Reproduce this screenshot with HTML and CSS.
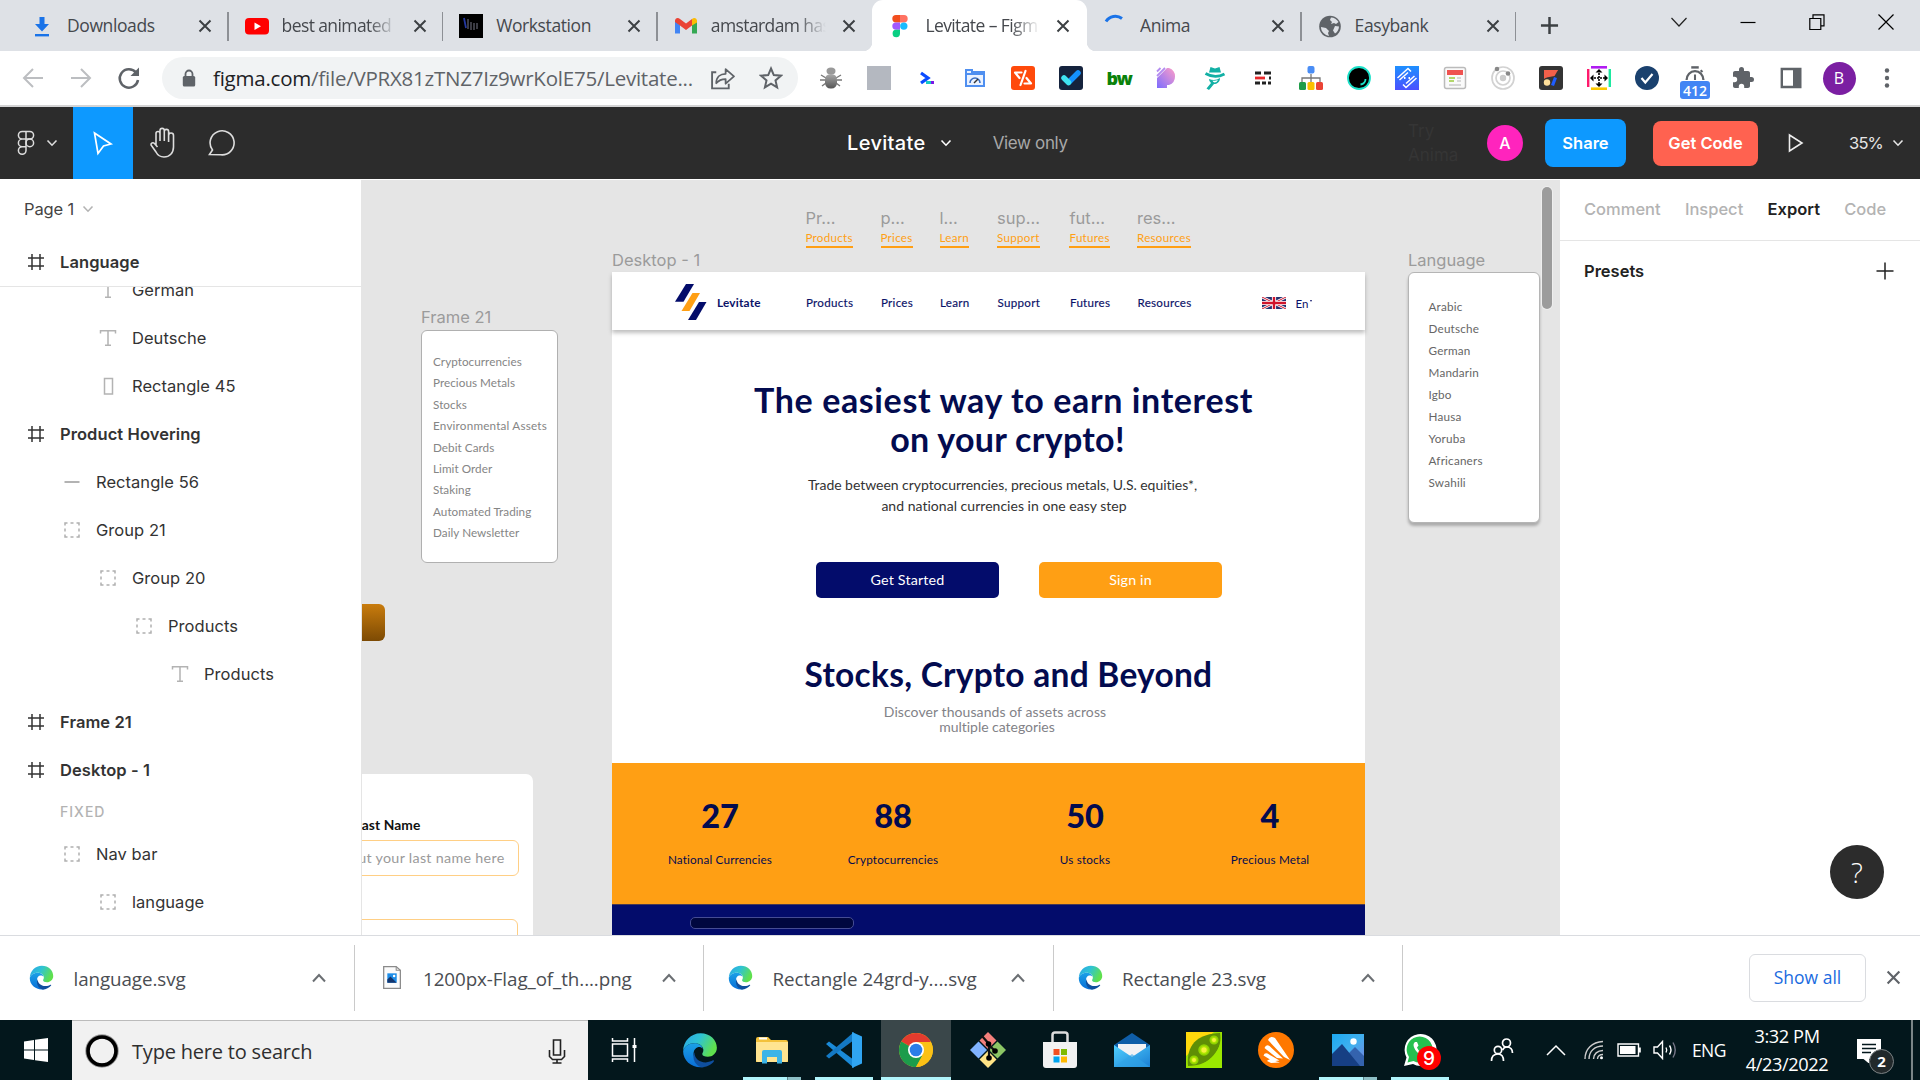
FILE: index.html
```html
<!DOCTYPE html>
<html lang="en">
<head>
<meta charset="utf-8">
<title>Levitate – Figma</title>
<link rel="stylesheet" href="styles.css">
</head>
<body>
<svg class="defs" width="0" height="0" aria-hidden="true">
  <defs>
    <linearGradient id="edgeA" x1="0" y1="0" x2="1" y2="0.4"><stop offset="0" stop-color="#2aa5e8"/><stop offset=".5" stop-color="#2fc3d3"/><stop offset="1" stop-color="#5fe04d"/></linearGradient>
    <linearGradient id="edgeB" x1="0" y1="0" x2="0" y2="1"><stop offset="0" stop-color="#1ba0e6"/><stop offset="1" stop-color="#0a6fd8"/></linearGradient>
    <linearGradient id="pg" x1="0" y1="1" x2="1" y2="0"><stop offset="0" stop-color="#7c6cff"/><stop offset="1" stop-color="#ff9ec8"/></linearGradient>
    <linearGradient id="bug" x1="0" y1="0" x2="0" y2="1"><stop offset="0" stop-color="#aaa"/><stop offset="1" stop-color="#555"/></linearGradient>
    <linearGradient id="mailG" x1="0" y1="0" x2="1" y2="1"><stop offset="0" stop-color="#50d0ff"/><stop offset="1" stop-color="#1b7fd4"/></linearGradient>
    <linearGradient id="photoG" x1="0" y1="0" x2="1" y2="1"><stop offset="0" stop-color="#1ba8f0"/><stop offset=".5" stop-color="#41b0ee"/><stop offset="1" stop-color="#7b7fe0"/></linearGradient>
    <linearGradient id="diaG" x1="0" y1="0" x2="0" y2="1"><stop offset="0" stop-color="#1e90ff"/><stop offset="1" stop-color="#4a50ff"/></linearGradient>
  </defs>
  <symbol id="x" viewBox="0 0 14 14"><path d="M1.5 1.5l11 11M12.5 1.5l-11 11" stroke="currentColor" stroke-width="2" fill="none"/></symbol>
  <symbol id="down" viewBox="0 0 12 8"><path d="M1.5 1.5L6 6.2l4.500-4.700" stroke="currentColor" stroke-width="1.600" fill="none"/></symbol>
  <symbol id="up" viewBox="0 0 16 12"><path d="M2 9.500L8 3l6 6.500" stroke="#6b6f73" stroke-width="2" fill="none"/></symbol>
  <symbol id="hash" viewBox="0 0 18 18"><path d="M5 1v16M13 1v16M1 5h16M1 13h16" stroke="#333" stroke-width="1.500" fill="none"/></symbol>
  <symbol id="tee" viewBox="0 0 18 18"><path d="M1.500 4.500V1.800h15v2.700M9 1.800v14.500M6 16.300h6" stroke="#b3b3b3" stroke-width="1.500" fill="none"/></symbol>
  <symbol id="grp" viewBox="0 0 18 18"><path d="M2 4.500V2h2.500M7.500 2h3M13.500 2H16v2.500M16 7.500v3M16 13.500V16h-2.500M10.500 16h-3M4.500 16H2v-2.500M2 10.500v-3" stroke="#b0b0b0" stroke-width="1.500" fill="none"/></symbol>
  <symbol id="edge" viewBox="0 0 32 32">
    <path d="M1 17C1 8 8 1 16.500 1 25 1 31 7 31 14c0 5-4 8-8 8-3 0-5-1-5-2.500 0-1 1-1.500 1-3.500 0-3-3-6-8-6C6 10 2 13 1 17z" fill="url(#edgeA)"/>
    <path d="M1 17c1-4 5-7 10-7 4 0 7 2 7.500 5-1-1.500-3-2-4.500-1.500C10 15 9 20 12 25c2 3.500 5 5.500 8 6-1 .2-2.500.3-3.500.3C8 31.300 1 25 1 17z" fill="url(#edgeB)"/>
    <path d="M11 18c0 5 4 9 10 9 3 0 5-1 6.500-1.800.6-.3 1.200.4.800 1C26 29 22 31.300 17.500 31.300 12 30 8.500 24 11 18z" fill="#0f4f9e"/>
  </symbol>
</svg>

<header class="tabs">
  <div class="tab"><svg class="fav" viewBox="0 0 24 24"><path d="M9.500 3h5v7H19l-7 7.500L5 10h4.500z" fill="#1a73e8"/><path d="M5 20h14v2.400H5z" fill="#1a73e8"/></svg><span>Downloads</span><svg class="tx"><use href="#x"/></svg></div>
  <div class="tab"><svg class="fav" viewBox="0 0 24 24"><rect x="0" y="4" width="24" height="16.500" rx="4" fill="#f00"/><path d="M9.500 8.500l6.500 3.800-6.500 3.800z" fill="#fff"/></svg><span class="fade">best animated</span><svg class="tx"><use href="#x"/></svg></div>
  <div class="tab"><svg class="fav" viewBox="0 0 24 24"><rect width="24" height="24" fill="#000"/><path d="M5 4l2 10" stroke="#2438a0" stroke-width="1.800"/><path d="M9 5v10M12 8v8M15 9v7M18 9v6" stroke="#3c3c44" stroke-width="2"/></svg><span>Workstation</span><svg class="tx"><use href="#x"/></svg></div>
  <div class="tab"><svg class="fav" viewBox="0 0 24 24"><path d="M1 6v13.500h5V11z" fill="#4285f4"/><path d="M23 6v13.500h-5V11z" fill="#34a853"/><path d="M1 7c0-3 3-4 5-2l6 4.500L18 5v6.500L12 16 6 11.500 1 8z" fill="#ea4335"/><path d="M18 5c2-2 5-1 5 2v1.500l-5 3z" fill="#fbbc04"/></svg><span class="fade">amstardam has</span><svg class="tx"><use href="#x"/></svg></div>
  <div class="tab active"><svg class="fav" viewBox="0 0 24 24"><path d="M12 1H8a3.700 3.700 0 000 7.400h4z" fill="#f24e1e"/><path d="M12 1h4a3.700 3.700 0 010 7.400h-4z" fill="#ff7262"/><path d="M12 8.400H8a3.700 3.700 0 000 7.400h4z" fill="#a259ff"/><circle cx="15.800" cy="12.100" r="3.700" fill="#1abcfe"/><path d="M12 15.800H8a3.700 3.700 0 104 3.700z" fill="#0acf83"/></svg><span class="fade">Levitate – Figm</span><svg class="tx"><use href="#x"/></svg></div>
  <div class="tab"><svg class="fav" viewBox="0 0 24 24"><path d="M3 7.500A11 11 0 0119 4.500" stroke="#1a73e8" stroke-width="3" fill="none"/></svg><span>Anima</span><svg class="tx"><use href="#x"/></svg></div>
  <div class="tab"><svg class="fav" viewBox="0 0 24 24"><circle cx="12" cy="12.500" r="10.800" fill="#5f6368"/><path d="M13 3.500c3 0 6 2 7.500 4.500L18 10l-2-1-3 1 1-2-2-2zM3 13l5 1 3 3-1 2 1 3c-4-1-8-4-8-9zM17 12l4 .5c0 3-2 6-4 7l-2-3z" fill="#dee1e6"/></svg><span>Easybank</span><svg class="tx"><use href="#x"/></svg></div>
  <svg class="plus" viewBox="0 0 20 20"><path d="M10 1v18M1 10h18" stroke="#3c4043" stroke-width="2.600"/></svg>
  <div class="winctl">
    <svg viewBox="0 0 16 16"><path d="M.5 4L8 12l7.500-8" stroke="#222" stroke-width="1.200" fill="none"/></svg>
    <svg viewBox="0 0 16 16"><path d="M.5 8.500h15" stroke="#000" stroke-width="1.200"/></svg>
    <svg viewBox="0 0 16 16"><path d="M.8 4.500h11v11H.8zM4 4.500v-3.700h11v11h-3.200" stroke="#000" stroke-width="1.200" fill="none"/></svg>
    <svg viewBox="0 0 16 16"><path d="M.5.500l15 15M15.500.500l-15 15" stroke="#000" stroke-width="1.200"/></svg>
  </div>
</header>

<div class="toolbar">
  <svg class="nav" viewBox="0 0 24 24"><path d="M22 12H3M12 3L3 12l9 9" stroke="#bcbec1" stroke-width="2" fill="none"/></svg>
  <svg class="nav" viewBox="0 0 24 24"><path d="M2 12h19M12 3l9 9-9 9" stroke="#bcbec1" stroke-width="2" fill="none"/></svg>
  <svg class="nav n3" viewBox="0 0 24 24"><path d="M19 6.500A9.200 9.200 0 1021 14" stroke="#5f6368" stroke-width="2.500" fill="none"/><path d="M22 1.500V10h-8.500z" fill="#5f6368"/></svg>
  <div class="omni">
    <svg class="lock" viewBox="0 0 14 18"><path d="M3.500 8V5a3.500 3.500 0 017 0v3" stroke="#5f6368" stroke-width="1.800" fill="none"/><rect x=".8" y="7" width="12.400" height="10.500" rx="1.500" fill="#5f6368"/></svg>
    <span class="url"><b>figma.com</b>/file/VPRX81zTNZ7Iz9wrKolE75/Levitate...</span>
    <svg class="share" viewBox="0 0 24 24"><path d="M6 6H2v15.500h16V17" stroke="#5f6368" stroke-width="1.800" fill="none"/><path d="M6 16.500c0-6 4-9 9-9V3l8 7-8 7v-4.500c-4 0-6.500 1-9 4z" stroke="#5f6368" stroke-width="1.700" fill="none" stroke-linejoin="round"/></svg>
    <svg class="star" viewBox="0 0 24 24"><path d="M12 2.500l2.800 6.600 7.100.6-5.400 4.700 1.600 7L12 17.700l-6.100 3.700 1.600-7L2.100 9.700l7.100-.6z" stroke="#5f6368" stroke-width="2" fill="none"/></svg>
  </div>
  <div class="exts">
    <svg viewBox="0 0 24 24"><path d="M2 9l5 3M1 14h5M3 20l4-3M22 9l-5 3M23 14h-5M21 20l-4-3" stroke="#777" stroke-width="1.400"/><ellipse cx="12" cy="5" rx="4.500" ry="3.500" fill="#999"/><rect x="6" y="8" width="12" height="14.500" rx="5.500" fill="url(#bug)"/></svg>
    <svg viewBox="0 0 24 24"><rect width="24" height="24" fill="#b4b8c0"/></svg>
    <svg viewBox="0 0 24 24"><path d="M6 7l7 5-7 5" stroke="#0a4bff" stroke-width="3.200" fill="none"/><path d="M11 16.500h6" stroke="#17c9c4" stroke-width="3"/><path d="M16 16.500h3" stroke="#7a18e8" stroke-width="3"/></svg>
    <svg viewBox="0 0 24 24"><path d="M3 4h6v2h12v14H3z" fill="#eaf2ff" stroke="#4f8ff0" stroke-width="2"/><path d="M3 8h18" stroke="#4f8ff0" stroke-width="2"/><path d="M7 17a5 5 0 0110 0" stroke="#3a6fc4" stroke-width="1.600" fill="none"/><path d="M11 17l4-4" stroke="#333" stroke-width="1.500"/></svg>
    <svg viewBox="0 0 24 24"><rect width="24" height="24" rx="3" fill="#ff4a0b"/><path d="M10.500 6.500H4l4.500 5.500M14.500 5l-5 14M13.500 17.500H20L15.500 12" stroke="#fff" stroke-width="2.200" fill="none" stroke-linejoin="round" stroke-linecap="round"/></svg>
    <svg viewBox="0 0 24 24"><rect width="24" height="24" rx="3" fill="#15233d"/><path d="M10 16l9-9" stroke="#1492ff" stroke-width="5.500" stroke-linecap="round"/><path d="M5 12l4.500 4.500" stroke="#3fe3f2" stroke-width="5.500" stroke-linecap="round"/></svg>
    <span class="bw">bw</span>
    <svg viewBox="0 0 24 24"><path d="M2 22V12L12 2h2a9 9 0 010 17h-2v3z" fill="url(#pg)"/><path d="M2 10l8-8M2 5.500L5.500 2" stroke="#b48cf0" stroke-width="1.800"/></svg>
    <svg viewBox="0 0 24 24"><path d="M7.500 1l4.500 1.500L16.500 1 18 6.500H6z" fill="#12b0a5"/><path d="M2.500 7.500Q12 13 21.500 8" stroke="#12b0a5" stroke-width="2.800" fill="none"/><path d="M6 13q6 2.500 11-1c0 4-3 6-6 6l-5 6-2.500-1.500L8 17q-2-1.500-2-4z" fill="#12b0a5"/><path d="M9.500 14.500q3 .6 5.500-.7-1 2.700-3.500 2.700-1.700-.3-2-2z" fill="#fff"/></svg>
    <svg viewBox="0 0 24 24"><path d="M4 7h6M13 7h7M4 17h5M11 17h4M17 17h3M18 12h2" stroke="#222" stroke-width="2.800"/><path d="M4 12h10" stroke="#e8282b" stroke-width="2.800"/></svg>
    <svg viewBox="0 0 24 24"><path d="M3 16v-4h18v4M12 8v8" stroke="#777" stroke-width="1.300" fill="none"/><rect x="8.500" y="0" width="7" height="7.500" rx="2" fill="#4a8df5"/><rect x="0" y="16" width="7" height="8" rx="1.500" fill="#1f9d49"/><rect x="8.500" y="16" width="7" height="8" rx="1.500" fill="#fbc100"/><rect x="17" y="16" width="7" height="8" rx="1.500" fill="#ea4335"/></svg>
    <svg viewBox="0 0 24 24"><circle cx="12" cy="12" r="11" fill="#000" stroke="#1be0c8" stroke-width="1.800"/><path d="M18.500 13c0 3-2 5-5 5.500" stroke="#1be0c8" stroke-width="1.800" fill="none"/></svg>
    <svg viewBox="0 0 24 24"><rect width="24" height="24" fill="url(#diaG)"/><path d="M2.500 12L13 2.500l3 3M21.500 12L11 21.500l-3-3M4.500 14L13 6.500M19.500 10L11 17.500" stroke="#fff" stroke-width="1.500" fill="none"/><path d="M9 12h1.500M13.500 12H15" stroke="#fff" stroke-width="1.800"/></svg>
    <svg viewBox="0 0 24 24"><rect x="1.500" y="1.500" width="21" height="21" rx="2" fill="#fafafa" stroke="#bbb" stroke-width="1.500"/><rect x="4" y="4" width="16" height="5" fill="#ef5350"/><path d="M6 12h6M6 15h5" stroke="#9ccc3c" stroke-width="1.600"/><path d="M14 12h4M14 15h4M6 19h12" stroke="#ccc" stroke-width="1.400"/></svg>
    <svg viewBox="0 0 24 24"><g fill="none" stroke="#d2d2d2" stroke-width="1.700"><circle cx="12" cy="12" r="11"/><circle cx="12" cy="12" r="7"/></g><circle cx="12" cy="12" r="3.200" fill="#ccc"/><circle cx="6" cy="3" r="2.300" fill="#888"/><circle cx="17" cy="7.500" r="2.300" fill="#888"/></svg>
    <svg viewBox="0 0 24 24"><rect width="24" height="24" rx="3" fill="#343434"/><path d="M5 4h14L5 13z" fill="#f2604a"/><path d="M5 4h14l-3.500 6L5 12z" fill="#f2604a"/><circle cx="8" cy="16.500" r="3.200" fill="#ffdf9a"/><path d="M16.500 11.500l-3 8" stroke="#1f5dff" stroke-width="3.200"/></svg>
    <svg viewBox="0 0 24 24"><path d="M4 1.300h16" stroke="#b01cf2" stroke-width="2.600"/><path d="M4 22.700h16" stroke="#fbc800" stroke-width="2.600"/><path d="M1.200 3v18" stroke="#ff1a6c" stroke-width="2.400"/><path d="M22.800 3v18" stroke="#1de9a0" stroke-width="2.400"/><path d="M12 4v16M4 12h16" stroke="#000" stroke-width="1.600" stroke-dasharray="2 1"/><path d="M8.500 6.500L12 3l3.500 3.500zM8.500 17.500L12 21l3.500-3.500zM6.500 8.500L3 12l3.500 3.500zM17.500 8.500L21 12l-3.500 3.500z"/></svg>
    <svg viewBox="0 0 24 24"><circle cx="12" cy="12" r="12" fill="#1a416e"/><path d="M6.500 12l3.800 4.500L17.500 8" stroke="#fff" stroke-width="2.200" fill="none"/></svg>
    <span class="timer"><svg viewBox="0 0 24 16"><path d="M8 1.500h8" stroke="#5f6368" stroke-width="2.600"/><path d="M3 15a9 9.500 0 0118 0" stroke="#5f6368" stroke-width="2.400" fill="none"/><path d="M12 9v6M18 4.500l2 2" stroke="#5f6368" stroke-width="2.200"/></svg><i>412</i></span>
    <svg viewBox="0 0 24 24"><path d="M20.500 11H19V7c0-1.100-.9-2-2-2h-4V3.500a2.500 2.500 0 00-5 0V5H4c-1.100 0-2 .9-2 2v3.800h1.500a2.700 2.700 0 010 5.400H2V20c0 1.100.9 2 2 2h3.800v-1.500a2.700 2.700 0 015.400 0V22H17c1.100 0 2-.9 2-2v-4h1.500a2.500 2.500 0 000-5z" fill="#5f6368"/></svg>
    <svg viewBox="0 0 24 24"><path d="M2.800 3h18.500v18H2.800z" fill="#fff" stroke="#5f6368" stroke-width="2.400"/><path d="M14 3h7v18h-7z" fill="#5f6368"/></svg>
    <span class="pf">B</span>
    <svg viewBox="0 0 24 24" fill="#5f6368"><circle cx="12" cy="4.500" r="2.200"/><circle cx="12" cy="12" r="2.200"/><circle cx="12" cy="19.500" r="2.200"/></svg>
  </div>
</div>

<div class="figbar">
  <div class="fmenu">
    <svg width="18" height="26" viewBox="0 0 18 26" fill="none" stroke="#ddd" stroke-width="1.500"><path d="M9 1.500H5.200a3.800 3.800 0 000 7.600H9zM9 1.500h3.800a3.800 3.800 0 010 7.600H9zM9 9.100H5.200a3.800 3.800 0 000 7.600H9zM9 16.700H5.200A3.800 3.800 0 109 20.500z"/><circle cx="12.800" cy="12.900" r="3.800"/></svg>
    <svg width="12" height="8"><use href="#down"/></svg>
  </div>
  <div class="tool on"><svg width="22" height="26" viewBox="0 0 22 26"><path d="M2.500 3l16.500 11-7.500 2-5.500 7.500z" fill="none" stroke="#fff" stroke-width="1.700"/></svg></div>
  <div class="tool"><svg width="28" height="32" viewBox="0 0 28 32"><path d="M7 18V6.500a2 2 0 014 0V14M11 14V3.500a2 2 0 014.300 0V14M15.300 14V4.500a2 2 0 014.300 0V15M19.600 8.500a2.200 2.200 0 014.900 0V20c0 6-4 10-9.500 10-4 0-6.500-2-8-5L2 18c-.5-2 2-3 3.500-1.500L8.500 20" fill="none" stroke="#ddd" stroke-width="1.600"/></svg></div>
  <div class="tool"><svg class="cmt" width="28" height="28" viewBox="0 0 28 28"><path d="M1.500 25.500l3-4.500a12 12 0 118 4.700z" fill="none" stroke="#ddd" stroke-width="1.600"/></svg></div>
  <div class="ftitle">Levitate<svg width="12" height="8"><use href="#down"/></svg><span>View only</span></div>
  <div class="anima">Try<br>Anima</div>
  <div class="ava">A</div>
  <div class="btn sh">Share</div>
  <div class="btn gc">Get Code</div>
  <svg class="play" width="16" height="20" viewBox="0 0 16 20"><path d="M1.500 2v16L14 10z" fill="none" stroke="#eee" stroke-width="1.600"/></svg>
  <div class="zoom">35%<svg width="12" height="8"><use href="#down"/></svg></div>
</div>

<main class="work">
  <aside class="left">
    <div class="page">Page 1<svg width="12" height="8"><use href="#down"/></svg></div>
    <div class="row top stick"><svg><use href="#hash"/></svg>Language</div>
    <div class="layers">
      <div class="row i2"><svg><use href="#tee"/></svg>German</div>
      <div class="row i2"><svg><use href="#tee"/></svg>Deutsche</div>
      <div class="row i2"><svg viewBox="0 0 18 18"><rect x="5.500" y="1.500" width="8" height="15.500" fill="none" stroke="#b3b3b3" stroke-width="1.500"/></svg>Rectangle 45</div>
      <div class="row top"><svg><use href="#hash"/></svg>Product Hovering</div>
      <div class="row i1"><svg viewBox="0 0 18 18"><path d="M1.500 9h15" stroke="#b3b3b3" stroke-width="2"/></svg>Rectangle 56</div>
      <div class="row i1"><svg><use href="#grp"/></svg>Group 21</div>
      <div class="row i2"><svg><use href="#grp"/></svg>Group 20</div>
      <div class="row i3"><svg><use href="#grp"/></svg>Products</div>
      <div class="row i4"><svg><use href="#tee"/></svg>Products</div>
      <div class="row top"><svg><use href="#hash"/></svg>Frame 21</div>
      <div class="row top"><svg><use href="#hash"/></svg>Desktop - 1</div>
      <div class="fixed">FIXED</div>
      <div class="row i1"><svg><use href="#grp"/></svg>Nav bar</div>
      <div class="row i2"><svg><use href="#grp"/></svg>language</div>
    </div>
  </aside>

  <section class="canvas">
    <div class="brown"></div>
    <div class="form">
      <div class="flabel">Last Name</div>
      <div class="finput">Input your last name here</div>
      <div class="finput second"></div>
    </div>
    <div class="frame f21">
      <h6>Frame 21</h6>
      <ul><li>Cryptocurrencies</li><li>Precious Metals</li><li>Stocks</li><li class="wide">Environmental Assets</li><li>Debit Cards</li><li>Limit Order</li><li>Staking</li><li>Automated Trading</li><li>Daily Newsletter</li></ul>
    </div>
    <div class="hovers navgrid">
      <div><em>Pr...</em><u>Products</u></div><div><em>p...</em><u>Prices</u></div><div><em>l...</em><u>Learn</u></div><div><em>sup...</em><u>Support</u></div><div><em>fut...</em><u>Futures</u></div><div><em>res...</em><u>Resources</u></div>
    </div>
    <div class="frame desk">
      <h6>Desktop - 1</h6>
      <div class="site">
        <nav>
          <svg class="logo" width="32" height="36" viewBox="0 0 32 36"><path d="M0 17.800L11 0h8L8.500 17.800z" fill="#030c6b"/><path d="M6.500 27l11-18H25L14.500 27z" fill="#ff9f14"/><path d="M13 36l11-18h7.500L21 36z" fill="#030c6b"/></svg>
          <strong>Levitate</strong>
          <div class="navgrid"><span>Products</span><span>Prices</span><span>Learn</span><span>Support</span><span>Futures</span><span>Resources</span></div>
          <svg class="flag" width="24" height="12" viewBox="0 0 24 12"><path d="M0 0h24v12H0z" fill="#23306f"/><path d="M0 0l24 12M24 0L0 12" stroke="#fff" stroke-width="2.600"/><path d="M0 0l24 12M24 0L0 12" stroke="#d0142c" stroke-width="1"/><path d="M12 0v12M0 6h24" stroke="#fff" stroke-width="4.200"/><path d="M12 0v12M0 6h24" stroke="#d0142c" stroke-width="2.400"/></svg>
          <span class="en">En</span><i class="tri"></i>
        </nav>
        <h1>The easiest way to earn interest<br><span>on your crypto!</span></h1>
        <p class="lead">Trade between cryptocurrencies, precious metals, U.S. equities*,<br><span>and national currencies in one easy step</span></p>
        <div class="cta"><a>Get Started</a><a class="or">Sign in</a></div>
        <h2>Stocks, Crypto and Beyond</h2>
        <p class="sub">Discover thousands of assets across<br><span>multiple categories</span></p>
        <div class="stats">
          <div><b>27</b>National Currencies</div><div><b>88</b>Cryptocurrencies</div><div><b>50</b>Us stocks</div><div><b>4</b>Precious Metal</div>
        </div>
        <div class="navy"><i></i></div>
      </div>
    </div>
    <div class="frame lang">
      <h6>Language</h6>
      <ul><li>Arabic</li><li>Deutsche</li><li>German</li><li>Mandarin</li><li>Igbo</li><li>Hausa</li><li>Yoruba</li><li>Africaners</li><li>Swahili</li></ul>
    </div>
    <div class="scroll"></div>
  </section>

  <aside class="right">
    <div class="rtabs"><span>Comment</span><span>Inspect</span><span class="cur">Export</span><span>Code</span></div>
    <div class="presets">Presets<svg width="18" height="18" viewBox="0 0 18 18"><path d="M9 .500v17M.500 9h17" stroke="#222" stroke-width="1.500"/></svg></div>
    <div class="help">?</div>
  </aside>
</main>

<div class="dls">
  <div class="dl"><svg class="ic"><use href="#edge"/></svg><span>language.svg</span><svg class="up"><use href="#up"/></svg></div>
  <div class="dl"><svg class="ic" viewBox="0 0 24 24"><path d="M4.500 1.500h12l4 3.500v17.500h-16z" fill="#fbfbfb" stroke="#8a8a8a" stroke-width="1.200"/><path d="M16.500 1.500V5h4" fill="none" stroke="#8a8a8a"/><rect x="8" y="8" width="9" height="9" fill="#1d8de8"/><path d="M8 17v-3l3-3 6 6z" fill="#12356e"/><circle cx="14.500" cy="10.500" r="1.200" fill="#fff"/></svg><span>1200px-Flag_of_th....png</span><svg class="up"><use href="#up"/></svg></div>
  <div class="dl"><svg class="ic"><use href="#edge"/></svg><span class="t3">Rectangle 24grd-y....svg</span><svg class="up"><use href="#up"/></svg></div>
  <div class="dl"><svg class="ic"><use href="#edge"/></svg><span>Rectangle 23.svg</span><svg class="up"><use href="#up"/></svg></div>
  <div class="showall">Show all</div>
  <svg class="dx" width="15" height="15"><use href="#x"/></svg>
</div>

<footer class="task">
  <div class="start"><svg width="24" height="24" viewBox="0 0 24 24" fill="#fff"><path d="M0 3.400L10 2v9.500H0zM11 1.800L24 0v11.500H11zM0 12.500h10V22L0 20.600zM11 12.500h13V24l-13-1.800z"/></svg></div>
  <div class="search">
    <svg width="34" height="34" viewBox="0 0 34 34"><circle cx="17" cy="17" r="14.500" fill="none" stroke="#999" stroke-width="4.500"/><circle cx="17" cy="17" r="14" fill="none" stroke="#000" stroke-width="3.600"/></svg>
    <span>Type here to search</span>
    <svg width="18" height="26" viewBox="0 0 18 26"><path d="M5.500 2h7v15h-7zM1.500 12v6.500l3 3h9l3-3V12M9 21.500V25M4.500 25h9" fill="none" stroke="#222" stroke-width="1.600"/></svg>
  </div>
  <div class="cell tv"><svg width="26" height="24" viewBox="0 0 26 24" fill="none" stroke="#fff" stroke-width="1.500"><path d="M1.500 6h15v12h-15zM1.500 0v3h15V0M1.500 24v-3h15v3M23.500 0v24"/><path d="M21.500 8.500h4" stroke-width="3"/></svg></div>
  <div class="cell"><svg width="36" height="36"><use href="#edge"/></svg></div>
  <div class="cell w"><svg width="32" height="28" viewBox="0 0 32 28"><path d="M0 3q0-2 2-2h10l3 3h15q2 0 2 2v20H0z" fill="#f3c13a"/><path d="M0 6h32v18q0 2-2 2H2q-2 0-2-2z" fill="#ffe490"/><path d="M3 2.500h8" stroke="#fff" stroke-width="2"/><path d="M6 27.500V16q0-2 2-2h16q2 0 2 2v11.500h-5V21H11v6.500z" fill="#3cb4e7"/></svg></div>
  <div class="cell"><svg width="36" height="36" viewBox="0 0 36 36"><path d="M0 12l3-2.500L28 28v8z" fill="#1a8ad8"/><path d="M0 24l3 2.500L28 8V0z" fill="#1479c4"/><path d="M26 0l10 4.500v27L26 36z" fill="#30a5f2"/></svg><i class="line"></i></div>
  <div class="cell chrome"><svg width="34" height="34" viewBox="0 0 34 34"><circle cx="17" cy="17" r="17" fill="#fbc116"/><path d="M17 17L2.300 8.500A17 17 0 0131.700 8.500z" fill="#e33b2e"/><path d="M17 17L2.300 8.500A17 17 0 0017 34l6-11z" fill="#1c9c4b"/><path d="M17 9h14.900A17 17 0 0117 34l7-12z" fill="#fbc116"/><circle cx="17" cy="17" r="8" fill="#fff"/><circle cx="17" cy="17" r="6.300" fill="#2b7de9"/></svg><i class="line"></i></div>
  <div class="cell"><svg width="38" height="38" viewBox="0 0 38 38"><path d="M19 1l8.500 8.500L19 18l-8.500-8.500z" fill="#f4807c"/><path d="M28.500 10.500L37 19l-8.500 8.500L20 19z" fill="#8cc665"/><path d="M19 20l8.500 8.500L19 37l-8.500-8.500z" fill="#ffe486"/><path d="M9.500 10.500L18 19l-8.500 8.500L1 19z" fill="#80b3ff"/><path d="M13 5l7 8v15M20 14l7 7" stroke="#111" stroke-width="2.200" fill="none"/><circle cx="19.500" cy="13" r="2.800"/><circle cx="26" cy="20" r="2.800"/><circle cx="20" cy="27" r="2.800"/></svg></div>
  <div class="cell"><svg width="36" height="38" viewBox="0 0 36 38"><path d="M10.500 13V4q0-2.500 2.500-2.500h10q2.500 0 2.500 2.500v9" fill="none" stroke="#ddd" stroke-width="2.500"/><path d="M1 11h34v23q0 3-3 3H4q-3 0-3-3z" fill="#f2f2f2"/><path d="M11.500 18h6v6h-6z" fill="#f25022"/><path d="M19 18h6v6h-6z" fill="#7fba00"/><path d="M11.500 25.500h6v6h-6z" fill="#00a4ef"/><path d="M19 25.500h6v6h-6z" fill="#ffb900"/></svg></div>
  <div class="cell"><svg width="36" height="34" viewBox="0 0 36 34"><path d="M0 12L18 0l18 12v5H0z" fill="#0f5ea8"/><path d="M4 11h28v14H4z" fill="#f2f2f4"/><path d="M0 12l18 12 18-12v22H0z" fill="url(#mailG)"/><path d="M0 34l18-13 18 13z" fill="#31a4e6" opacity=".6"/></svg></div>
  <div class="cell"><svg width="36" height="36" viewBox="0 0 36 36"><path d="M0 0h36v36H0z" fill="#9be000"/><path d="M0 0h28L0 24z" fill="#ffd90c"/><path d="M2 34C0 12 12 2 34 1c3 18-10 33-32 33z" fill="#5f8f05"/><path d="M36 0v36H5C24 32 36 18 36 0z" fill="#9be800"/><g fill="#aee500" stroke="#8fd400" stroke-width="1.500"><circle cx="8" cy="28" r="3.800"/><circle cx="18" cy="18" r="5"/><circle cx="28" cy="8" r="3.800"/></g><g fill="#f5f23c"><circle cx="8" cy="28" r="2"/><circle cx="18" cy="18" r="2.700"/><circle cx="28" cy="8" r="2"/></g></svg></div>
  <div class="cell"><svg width="36" height="36" viewBox="0 0 36 36"><circle cx="18" cy="18" r="18" fill="#ff7800"/><path d="M10 8Q12 3 17 6l15 22-6-3zM6.500 16q1.500-4 5-2l13.500 12.500-6-.5zM5.500 23.500q1-3 4-2l12 7-6.500.8zM9 29q1-2 3.500-1.500l9.500 3-9 .5z" fill="#fff"/></svg></div>
  <div class="cell w"><svg width="32" height="32" viewBox="0 0 32 32"><path d="M0 0h32v32H0z" fill="url(#photoG)"/><path d="M16 20l7-7 9 9v10H8z" fill="#3463ae"/><path d="M0 20l10-10 18 22H0z" fill="#163f83"/><circle cx="21.500" cy="7.500" r="3.200" fill="#fff"/></svg></div>
  <div class="cell wa"><svg width="34" height="34" viewBox="0 0 34 34"><path d="M1 33l2.500-8.500A16 16 0 1110 31z" fill="#fff"/><path d="M4.500 29.500L6 24a13 13 0 114.500 4z" fill="#25c04f"/><path d="M12 9c-3 2-1 7 3 11 4 4 8 5 10 3l.5-3-4-2-2 2c-3-1-5-4-5.500-5.500l1.500-2L14 9z" fill="#fff"/></svg><b>9</b><i class="line"></i></div>
  <div class="tray">
    <svg width="24" height="24" viewBox="0 0 24 24" fill="none" stroke="#fff" stroke-width="1.700"><circle cx="8" cy="12" r="3.700"/><path d="M1.500 23c0-4 2-7 6.500-7s5.500 3 5.500 7"/><circle cx="16.500" cy="5" r="4"/><path d="M12.500 12c1-2 2.500-3 4-3 4 0 6 2.500 6 6"/></svg>
    <svg class="g1" width="20" height="12" viewBox="0 0 20 12"><path d="M1 11l9-9 9 9" stroke="#fff" stroke-width="1.500" fill="none"/></svg>
    <svg class="g2" width="20" height="20" viewBox="0 0 20 20" fill="none" stroke="#ccc" stroke-width="1.400"><path d="M1 19C1 9 8 2 19 1.500M5 19C5 11 11 6 19 6M9.500 19c0-5 4-8.500 9.500-8.500M13.500 19c0-3 2.500-4.500 5.500-4.500"/><circle cx="17.500" cy="17.800" r="1.500" fill="#fff" stroke="none"/></svg>
    <svg class="g3" width="24" height="14" viewBox="0 0 24 14"><path d="M1 1h20.500v12H1z" fill="none" stroke="#fff" stroke-width="1.400"/><path d="M3 3h15.500v8H3zM22 4.500h1.800v5H22z" fill="#fff"/></svg>
    <svg class="g4" width="24" height="20" viewBox="0 0 24 20" fill="none" stroke="#fff" stroke-width="1.400"><path d="M1 7h3.500L9.500 1.500v17L4.500 13H1z"/><path d="M13 7.500q1.500 2.500 0 5M16.500 5.500q3 4.500 0 9"/><path d="M20 2.500q4.500 7.500 0 15" stroke="#778"/></svg>
    <span class="eng">ENG</span>
    <div class="clock">3:32 PM<br>4/23/2022</div>
    <div class="note"><svg width="24" height="24" viewBox="0 0 24 24"><path d="M0 0h24v20H12v4.500L6.500 20H0z" fill="#fff"/><path d="M5 5.500h14M5 9.500h14M5 13.500h9" stroke="#03171c" stroke-width="1.300"/></svg><b>2</b></div>
    <i class="peek"></i>
  </div>
</footer>
</body>
</html>
```
FILE: styles.css
```css
* { box-sizing: border-box; }
body { margin: 0; width: 1920px; height: 1080px; overflow: hidden; background: #fff; font-family: "Open Sans", sans-serif; display: flex; flex-direction: column; }
svg { display: block; flex: none; }
.defs { position: absolute; }
h1, h2, h6, p, ul { margin: 0; padding: 0; font-weight: 400; }
ul { list-style: none; }
i, em { font-style: normal; }

/* browser tab strip */
.tabs { height: 51px; flex: none; background: #dee1e6; display: flex; align-items: center; padding-left: 14px; }
.tab { width: 214.6px; height: 100%; display: flex; align-items: center; padding-left: 16px; font-size: 17.5px; letter-spacing: -.4px; color: #45484d; position: relative; flex: none; }
.tab::after { content: ""; position: absolute; right: 0; top: 12px; width: 1.500px; height: 29px; background: #8d9095; }
.tab:nth-child(4)::after, .tab.active::after { display: none; }
.fav { width: 24px; height: 24px; margin-right: 13px; }
.tab span { width: 115px; white-space: nowrap; overflow: hidden; line-height: 30px; padding-bottom: 1px; }
.tab .fade { letter-spacing: -.6px; -webkit-mask-image: linear-gradient(90deg, #000 75%, transparent 100%); mask-image: linear-gradient(90deg, #000 75%, transparent 100%); }
.tx { width: 14px; height: 14px; color: #3c4043; margin-left: 16px; }
.tab.active { background: #fff; border-radius: 11px 11px 0 0; }
.tab.active::before { content: ""; position: absolute; left: -9px; right: -9px; bottom: 0; height: 9px; background: radial-gradient(circle at 0 0, transparent 9px, #fff 9.500px) left / 9px 9px no-repeat, radial-gradient(circle at 100% 0, transparent 9px, #fff 9.500px) right / 9px 9px no-repeat; }
.plus { width: 19px; height: 19px; margin-left: 24px; }
.winctl { display: flex; gap: 53px; margin-left: auto; padding: 0 26px 7px 0; }
.winctl svg { width: 16px; height: 16px; }

/* address bar row */
.toolbar { height: 56px; flex: none; border-bottom: 2px solid #d4d4d5; display: flex; align-items: center; padding: 0 9px 0 21px; }
.nav { width: 24px; height: 24px; margin-right: 24px; }
.nav.n3 { margin-right: 21px; }
.omni { width: 636px; height: 42px; border-radius: 21px; background: #f1f3f4; display: flex; align-items: center; padding-left: 20px; margin-right: 9px; flex: none; }
.lock { width: 14px; height: 18px; margin-right: 17px; }
.url { font-size: 20.5px; letter-spacing: -.23px; color: #5f6368; width: 497px; white-space: nowrap; line-height: 30px; }
.url b { font-weight: 400; color: #202124; }
.share { width: 25px; height: 25px; margin-right: 24px; }
.star { width: 24px; height: 24px; }
.exts { display: flex; }
.exts > * { width: 24px; height: 24px; margin: 0 12px; flex: none; }
.exts .bw { font: 800 18px/24px "Open Sans", sans-serif; letter-spacing: -1.500px; color: #0a820a; text-align: center; display: flex; justify-content: center; }
.timer { display: flex; flex-direction: column; align-items: center; }
.timer svg { width: 24px; height: 15px; }
.timer i { width: 30px; height: 18px; border-radius: 3px; background: #4285f4; color: #fff; font: 600 14px/19px "Open Sans", sans-serif; text-align: center; flex: none; }
.exts .pf { width: 33px; height: 33px; margin: -4.500px 7.500px; border-radius: 50%; background: #7b1fa2; color: #fff; font-size: 16px; line-height: 33px; text-align: center; }

/* editor bar */
.figbar { height: 72px; flex: none; background: #2c2c2c; display: flex; align-items: center; font-family: "Inter", sans-serif; color: #fff; }
.fmenu { width: 73px; display: flex; align-items: center; gap: 11px; padding-left: 17px; color: #ddd; }
.tool { width: 60px; height: 72px; display: flex; align-items: center; justify-content: center; }
.tool.on { background: #0d99ff; }
.cmt { margin-right: 2px; }
.ftitle { margin-left: 594px; width: 561px; font-size: 20px; font-weight: 500; letter-spacing: .35px; display: flex; align-items: center; }
.ftitle svg { margin: 0 41px 0 14px; }
.ftitle span { font-size: 17px; font-weight: 400; letter-spacing: -.35px; color: #a8a8a8; }
.anima { width: 79px; font-size: 17px; line-height: 24px; color: #353535; }
.ava { width: 36px; height: 36px; border-radius: 50%; background: #ff24bd; font-size: 16px; font-weight: 500; line-height: 36px; text-align: center; margin-right: 22px; }
.btn { border-radius: 8px; font-size: 16.500px; font-weight: 600; letter-spacing: 0; display: flex; align-items: center; justify-content: center; }
.sh { width: 81px; height: 48px; background: #0d99ff; margin-right: 27px; }
.gc { width: 105px; height: 45px; background: #ff6250; margin-right: 30px; }
.play { margin-right: 45px; }
.zoom { font-size: 16.500px; letter-spacing: -.8px; display: flex; align-items: center; gap: 9px; color: #e6e6e6; }

.work { height: 756px; flex: none; display: flex; margin-top: 1px; font-family: "Inter", sans-serif; border-bottom: 1px solid #dadce0; }

/* layer list */
.left { width: 362px; height: 100%; flex: none; display: flex; flex-direction: column; border-right: 1px solid #e5e5e5; color: #333; font-size: 16.500px; letter-spacing: .04px; }
.page { height: 58px; padding: 0 0 0 24px; display: flex; align-items: center; gap: 8px; color: #444; letter-spacing: -.15px; }
.page svg { color: #b3b3b3; }
.row { height: 48px; display: flex; align-items: center; flex: none; gap: 15px; padding-left: 27px; white-space: nowrap; }
.row svg { width: 18px; height: 18px; }
.row.top { font-weight: 600; letter-spacing: .08px; }
.row.i1 { padding-left: 63px; }
.row.i2 { padding-left: 99px; }
.row.i3 { padding-left: 135px; }
.row.i4 { padding-left: 171px; }
.left .stick { height: 49px; border-bottom: 1px solid #e5e5e5; }
.layers { flex: 1; overflow: hidden; }
.layers .row:first-child { margin-top: -21px; }
.fixed { height: 36px; line-height: 36px; padding-left: 60px; font-size: 14px; font-weight: 500; letter-spacing: 1px; color: #b3b3b3; }

/* canvas */
.canvas { position: relative; width: 1198px; height: 100%; flex: none; overflow: hidden; background: #e5e5e5; font-family: "Lato", sans-serif; }
.frame, .brown, .form, .hovers, .scroll { position: absolute; }
.frame h6, .hovers em { font: 400 16.500px/24px "Inter", sans-serif; color: #9b9b9b; white-space: nowrap; }
.frame ul { background: #fff; border-radius: 6px; font-size: 11.700px; }
.f21 { left: 59px; top: 125px; width: 137px; }
.f21 ul { height: 233px; margin-top: 1px; border: 1px solid #b0b0b0; padding: 20px 0 0 11px; line-height: 21.400px; letter-spacing: .05px; color: #858585; }
.f21 .wide { letter-spacing: .2px; }
.lang { left: 1046px; top: 68px; width: 131.500px; }
.lang ul { height: 251px; border: 1px solid #b5b5b5; box-shadow: 0 3px 3px rgba(0,0,0,.25); padding: 23px 0 0 19.500px; line-height: 21.970px; letter-spacing: .2px; color: #666; }
.brown { left: 0; top: 424px; width: 23px; height: 37px; border-radius: 0 6px 6px 0; background: linear-gradient(#c97c0d, #7c4a04); }
.form { left: -200px; top: 594px; width: 370.500px; height: 200px; background: #fff; border-radius: 0 7px 0 0; padding-right: 14px; text-align: right; font-size: 14.300px; }
.flabel { padding: 40px 98px 0 0; font-weight: 700; line-height: 22px; color: #111; letter-spacing: .1px; font-size: 13.800px; }
.finput { margin-top: 4px; height: 36px; border: 1.500px solid #ffcf85; border-radius: 6px; line-height: 34px; padding-right: 13px; color: #9a9a9a; letter-spacing: .3px; }
.finput.second { margin-top: 43px; margin-right: 1px; height: 60px; }

.navgrid { display: grid; grid-template-columns: 75px 59px 57.600px 72.400px 67.500px 60px; font-size: 11.600px; letter-spacing: .27px; white-space: nowrap; }
.hovers { left: 443.500px; top: 26px; }
.hovers div { display: flex; flex-direction: column; align-items: flex-start; }
.hovers em { letter-spacing: 0; }
.hovers u { color: #ff9f14; text-decoration: none; line-height: 15.500px; border-bottom: 2px solid #ff9f14; }

.desk { left: 250px; top: 68px; width: 753px; }
.site { height: 680px; background: #fff; text-align: center; color: #030b4f; }
.site nav { height: 58px; display: flex; align-items: center; padding: 2px 0 0 63px; background: #fff; box-shadow: 0 3px 4px rgba(0,0,0,.25); color: #0b1268; }
.site nav strong { width: 89px; margin-left: 10px; text-align: left; font-size: 11.800px; letter-spacing: .2px; }
.site nav .navgrid { text-align: left; -webkit-text-stroke: .15px; }
.flag { margin-left: 65px; margin-top: 2px; }
.en { font-size: 11.500px; margin: 2px 2px 0 9px; }
.tri { border: 1.500px solid transparent; border-top: 2.500px solid #0b1268; border-bottom: 0; margin-top: -3px; }
.site h1 { font-size: 34px; font-weight: 700; line-height: 39.400px; letter-spacing: .62px; padding: 50px 0 0 30px; }
.site h1 span { letter-spacing: .3px; padding-left: 8px; }
.lead { font-size: 14px; line-height: 21px; letter-spacing: -.04px; color: #333; padding: 15px 0 0 28px; }
.lead span { padding-left: 3px; letter-spacing: .03px; }
.cta { display: flex; gap: 40px; padding: 46px 0 0 204px; }
.cta a { width: 183px; height: 36px; border-radius: 5px; background: #030c6b; color: #fff; font-size: 14.300px; letter-spacing: .15px; line-height: 35px; }
.cta .or { background: #ff9f14; line-height: 36px; }
.site h2 { font-size: 33.500px; font-weight: 700; letter-spacing: .26px; line-height: 40px; padding: 56px 0 0 40px; }
.sub { font-size: 14px; line-height: 15px; letter-spacing: .08px; color: #828287; padding: 10px 0 0 13px; }
.sub span { padding-left: 4px; letter-spacing: -.03px; }
.stats { margin-top: 29px; height: 141.500px; background: #ff9f14; display: flex; padding-top: 33px; font-size: 11.700px; letter-spacing: .17px; }
.stats div { width: 216px; }
.stats div:nth-child(2) { width: 130px; }
.stats div:nth-child(3) { width: 254px; }
.stats div:nth-child(4) { width: 116px; }
.stats b { display: block; font-size: 32.500px; font-weight: 900; line-height: 40px; letter-spacing: 0; margin-bottom: 16px; }
.navy { height: 60px; background: #030c6b; padding: 12px 0 0 78px; border-top: 1px solid #4a3a50; }
.navy i { display: block; width: 164px; height: 12px; border: 1.500px solid #454c94; border-radius: 5px; background: #00073f; }
.scroll { left: 1180px; top: 7px; width: 10px; height: 122px; border-radius: 5px; background: #9c9c9c; box-shadow: 0 0 0 1px #eee; }

/* export panel */
.right { width: 360px; height: 100%; font-size: 16.500px; display: flex; flex-direction: column; }
.rtabs { height: 61px; border-bottom: 1px solid #e5e5e5; padding: 0 0 2px 24px; display: flex; align-items: center; gap: 24.300px; color: #b3b3b3; font-weight: 500; }
.rtabs .cur { color: #222; font-weight: 600; }
.presets { height: 60px; padding: 0 26px 0 24px; display: flex; align-items: center; justify-content: space-between; font-weight: 600; color: #222; }
.help { margin: auto 36px 36px auto; width: 54px; height: 54px; border-radius: 50%; background: #2c2c2c; color: #fff; font: 300 28px/54px "Open Sans", sans-serif; text-align: center; }

/* downloads shelf */
.dls { height: 84px; flex: none; display: flex; align-items: center; padding-left: 5px; padding-bottom: 1px; }
.dl { width: 349.500px; height: 66px; border-right: 1.500px solid #cacaca; display: flex; align-items: center; padding-left: 24px; font-size: 18.800px; letter-spacing: -.08px; color: #4a4d52; flex: none; }
.ic { width: 25px; height: 25px; margin-right: 19.500px; }
.dl span { width: 237.500px; white-space: nowrap; line-height: 30px; padding-top: 3px; }
.dl .t3 { letter-spacing: -.02px; }
.up { width: 16px; height: 12px; }
.showall { width: 117px; height: 48px; margin-left: 346px; border: 1.500px solid #dadce0; border-radius: 6px; color: #1a6be0; font-size: 17.500px; line-height: 45px; text-align: center; }
.dx { margin-left: 20px; color: #5f6368; }

/* taskbar */
.task { height: 60px; flex: none; background: #03171c; display: flex; }
.start { width: 72px; display: flex; align-items: center; justify-content: center; }
.search { width: 516px; background: #f1f1f1; border-top: 1px solid #bbb; display: flex; align-items: center; padding-left: 13px; font-size: 20px; letter-spacing: -.2px; color: #2e2e2e; }
.search span { margin-left: 13px; width: 416px; padding-top: 1px; }
.cell { width: 72px; display: flex; align-items: center; justify-content: center; position: relative; flex: none; }
.tv { width: 76px; padding-right: 4px; }
.cell .line { position: absolute; left: 7px; width: 58px; bottom: 0; height: 3px; background: #b0f4fb; }
.w::after { content: ""; position: absolute; left: 7px; width: 58px; bottom: 0; height: 3px; background: linear-gradient(90deg, #b0f4fb 44px, #5c8489 44px, #5c8489 45px, #8dc0c6 45px); }
.chrome { background: linear-gradient(#3a474a, #3a474a) center / 70px 100% no-repeat; }
.chrome .line { left: 1px; width: 70px; }
.wa b { position: absolute; left: 33px; top: 26px; width: 24px; height: 24px; border-radius: 50%; background: #f00; color: #fff; font: 500 19px/25px "Inter", sans-serif; text-align: center; }
.tray { display: flex; align-items: center; flex: 1; color: #fff; padding-left: 34px; }
.tray > * { flex: none; }
.g1 { margin-left: 32px; }
.g2 { margin-left: 18px; }
.g3 { margin-left: 13px; }
.g4 { margin-left: 12px; }
.eng { font-size: 17.500px; letter-spacing: -.6px; margin-left: 15px; width: 51px; }
.clock { width: 88px; font-size: 18.200px; line-height: 28.500px; letter-spacing: -.4px; text-align: center; white-space: nowrap; }
.note { position: relative; margin-left: 26px; width: 24px; padding-top: 1px; }
.note b { position: absolute; left: 12px; top: 11px; width: 25px; height: 25px; border-radius: 50%; background: #22292b; border: 1.500px solid #7c8284; font-size: 15px; line-height: 22px; text-align: center; }
.peek { width: 2px; height: 60px; background: #7b8587; margin-left: 30px; }
```
